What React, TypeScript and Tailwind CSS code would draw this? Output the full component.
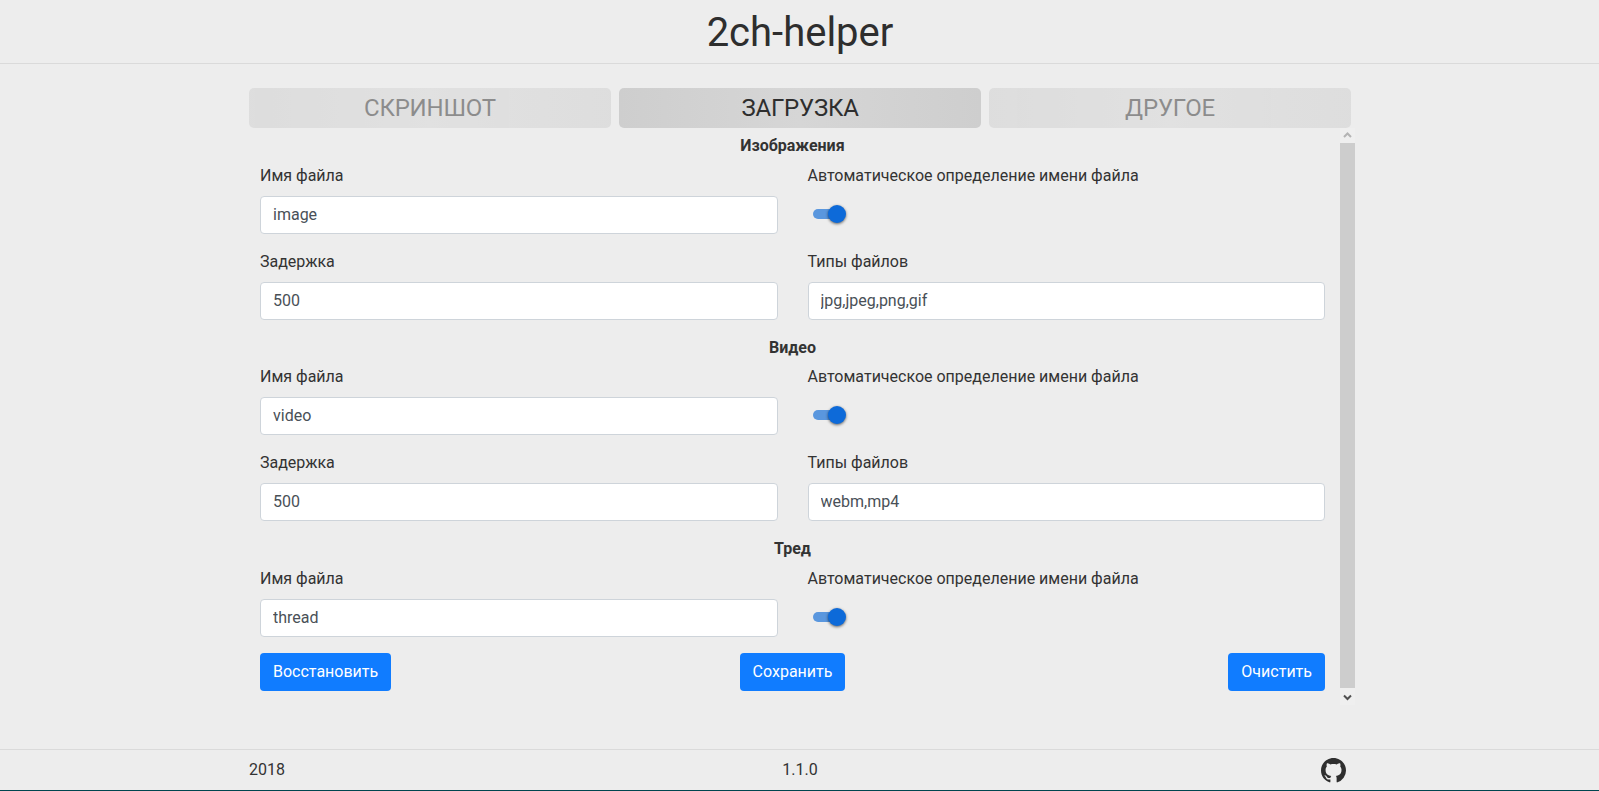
import React from "react";

type SectionData = { title: string; name: string; delay?: string; types?: string };

const sections: SectionData[] = [
  { title: "Изображения", name: "image", delay: "500", types: "jpg,jpeg,png,gif" },
  { title: "Видео", name: "video", delay: "500", types: "webm,mp4" },
  { title: "Тред", name: "thread" },
];

function Tab({ label, active = false }: { label: string; active?: boolean }) {
  return (
    <button
      className={
        "h-10 flex-1 rounded-[5px] bg-linear-to-r from-[#cecece] via-[#d6d6d6] to-[#cecece] text-2xl leading-10 tracking-[-0.2px] text-[#2e2e2e] " +
        (active ? "" : "opacity-50")
      }
    >
      {label}
    </button>
  );
}

function Field({ label, value }: { label: string; value: string }) {
  return (
    <label className="mb-4 block">
      <span className="mb-2 block h-6">{label}</span>
      <input
        className="block h-[38px] w-full rounded border border-[#ced4da] bg-white px-3 pb-0.5 text-[#495057] outline-none"
        defaultValue={value}
      />
    </label>
  );
}

function Toggle() {
  return (
    <div className="mb-4">
      <span className="mb-2 block h-6">Автоматическое определение имени файла</span>
      <div className="flex h-9 items-center pl-[5px]">
        <div className="flex h-2.5 w-8 items-center justify-end rounded-full bg-[#5a97de]">
          <div className="-mr-px size-[18px] shrink-0 rounded-full bg-[#0d6ad9] shadow-[0_1px_3px_rgba(0,0,0,0.6)]" />
        </div>
      </div>
    </div>
  );
}

function Section({ title, name, delay, types }: SectionData) {
  return (
    <section className="group">
      <h2 className="h-[30px] text-center font-bold group-even:h-[29px]">{title}</h2>
      <div className="grid grid-cols-2 gap-x-[30px]">
        <Field label="Имя файла" value={name} />
        <Toggle />
        {delay && <Field label="Задержка" value={delay} />}
        {types && <Field label="Типы файлов" value={types} />}
      </div>
    </section>
  );
}

function ActionButton({ label }: { label: string }) {
  return (
    <button className="h-[38px] rounded bg-[#107cff] px-[13px] text-white">{label}</button>
  );
}

function Scrollbar() {
  return (
    <div className="flex h-[577px] w-[15px] flex-col bg-[#efefef]">
      <svg className="h-[15px] w-[15px]" viewBox="0 0 15 15" fill="none" stroke="#b4b4b4" strokeWidth="2">
        <path d="M4 9 7.5 5.5 11 9" />
      </svg>
      <div className="flex-1 bg-[#cdcdcd]" />
      <svg className="h-[17px] w-[15px]" viewBox="0 0 15 17" fill="none" stroke="#505050" strokeWidth="2">
        <path d="M4 7.5 7.5 11 11 7.5" />
      </svg>
    </div>
  );
}

export default function App() {
  return (
    <div className="flex h-[791px] flex-col overflow-hidden border-b border-[#00454f] bg-[#ededed] font-[Roboto,sans-serif] text-base text-[#333333]">
      <header className="h-16 border-b border-[#dadada]">
        <h1 className="pt-[9px] pl-px text-center text-[40px] leading-[48px] text-[#2e2e2e]">2ch-helper</h1>
      </header>
      <main className="flex-1 pt-6">
        <nav className="ml-[249px] flex w-[1102px] gap-2">
          <Tab label="СКРИНШОТ" />
          <Tab label="ЗАГРУЗКА" active />
          <Tab label="ДРУГОЕ" />
        </nav>
        <div className="ml-[245px] flex w-[1110px]">
          <div className="flex-1 px-[15px] pt-1.5">
            {sections.map((s) => (
              <Section key={s.title} {...s} />
            ))}
            <div className="grid grid-cols-[1fr_auto_1fr]">
              <div>
                <ActionButton label="Восстановить" />
              </div>
              <ActionButton label="Сохранить" />
              <div className="text-right">
                <ActionButton label="Очистить" />
              </div>
            </div>
          </div>
          <Scrollbar />
        </div>
      </main>
      <footer className="h-[41px] border-t border-[#dadada]">
        <div className="ml-[249px] grid h-10 w-[1102px] grid-cols-3 items-center">
          <span>2018</span>
          <span className="text-center">1.1.0</span>
          <svg className="mt-px mr-[5px] size-[25px] justify-self-end" viewBox="0 0 16 16" fill="#2e2e2e">
            <path d="M8 0C3.58 0 0 3.58 0 8c0 3.54 2.29 6.53 5.47 7.59.4.07.55-.17.55-.38 0-.19-.01-.82-.01-1.49-2.01.37-2.53-.49-2.69-.94-.09-.23-.48-.94-.82-1.13-.28-.15-.68-.52-.01-.53.63-.01 1.08.58 1.23.82.72 1.21 1.87.87 2.33.66.07-.52.28-.87.51-1.07-1.78-.2-3.64-.89-3.64-3.95 0-.87.31-1.59.82-2.15-.08-.2-.36-1.02.08-2.12 0 0 .67-.21 2.2.82.64-.18 1.32-.27 2-.27s1.36.09 2 .27c1.53-1.04 2.2-.82 2.2-.82.44 1.1.16 1.92.08 2.12.51.56.82 1.27.82 2.15 0 3.07-1.87 3.75-3.65 3.95.29.25.54.73.54 1.48 0 1.07-.01 1.93-.01 2.2 0 .21.15.46.55.38A8.01 8.01 0 0 0 16 8c0-4.42-3.58-8-8-8z" />
          </svg>
        </div>
      </footer>
    </div>
  );
}
